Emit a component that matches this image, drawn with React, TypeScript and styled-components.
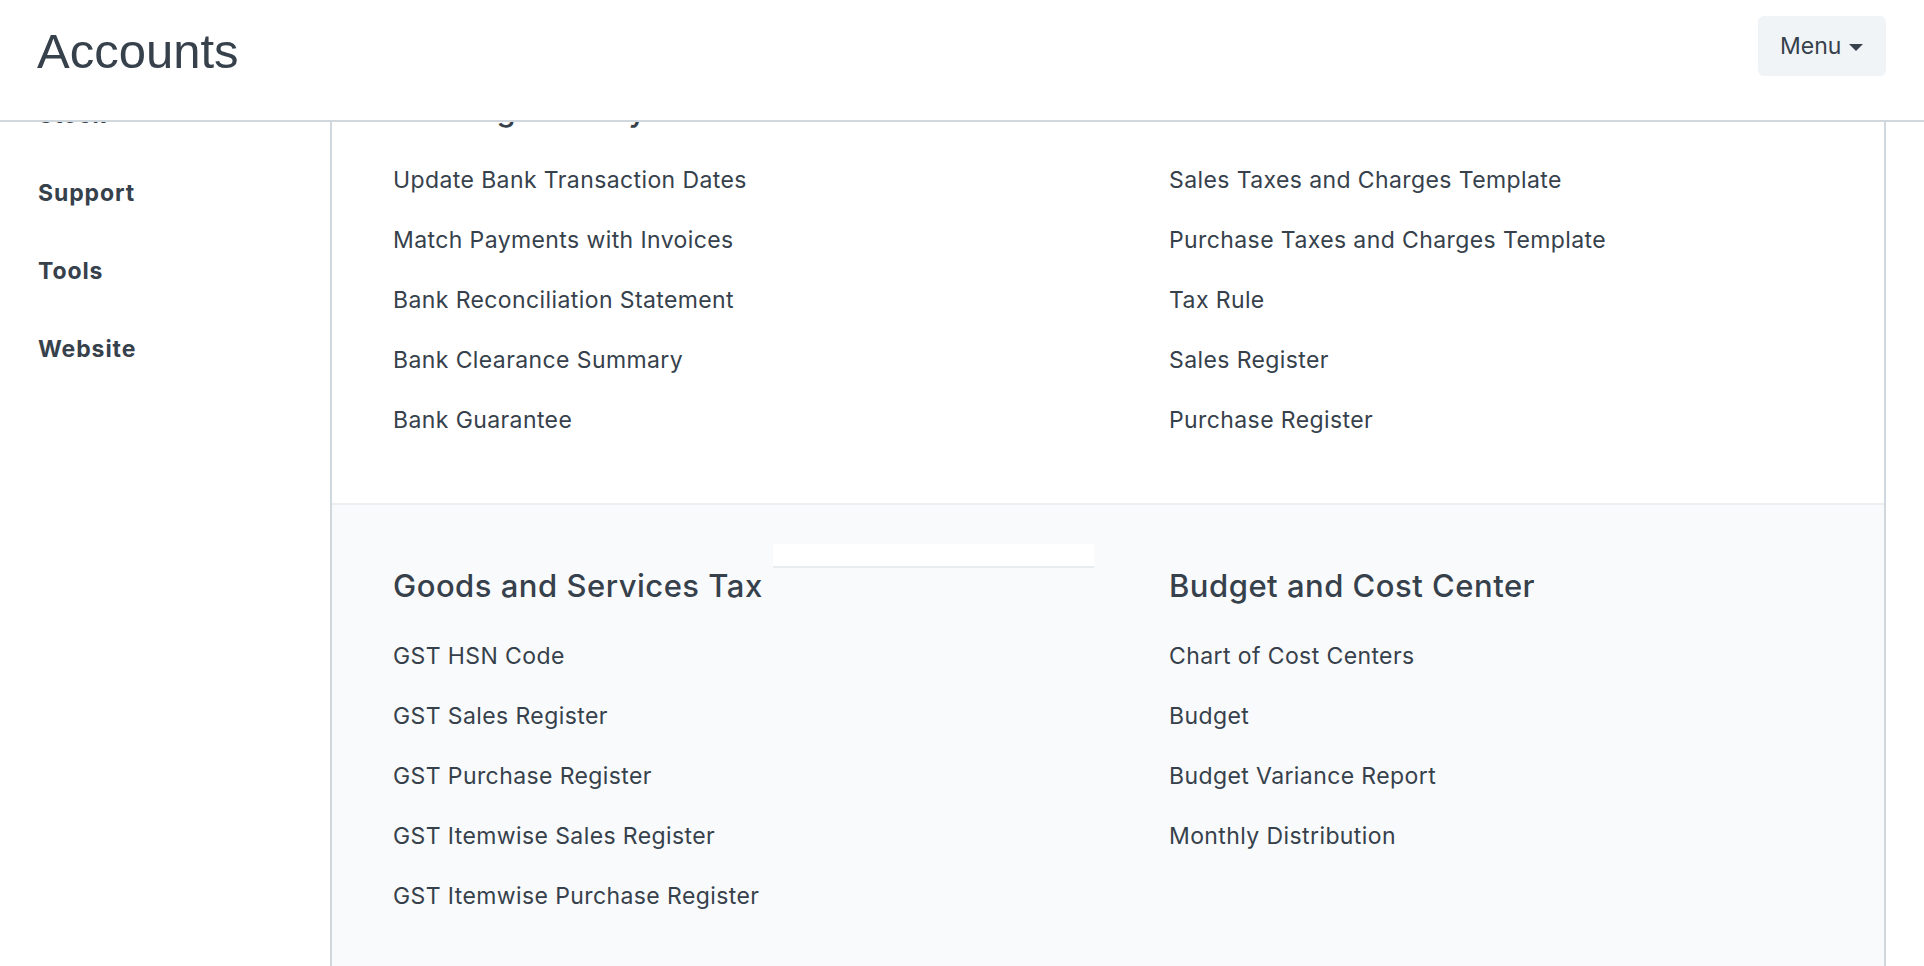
import { useLayoutEffect, useRef } from "react";
import styled, { createGlobalStyle } from "styled-components";

const GlobalStyle = createGlobalStyle`
  html, body {
    margin: 0;
    padding: 0;
  }
  body {
    font-family: Inter, "Noto Sans", sans-serif;
    color: #36414c;
    background: #ffffff;
  }
  * {
    box-sizing: border-box;
  }
`;

const Page = styled.div`
  height: 100vh;
  display: flex;
  flex-direction: column;
  overflow: hidden;
`;

const Header = styled.header`
  flex: none;
  height: 122px;
  display: flex;
  justify-content: space-between;
  align-items: flex-start;
  padding: 16px 38px 0 37px;
  border-bottom: 2px solid #d1d8dd;
  background: #ffffff;
`;

const Title = styled.h1`
  margin: 5px 0 0;
  font-family: "Liberation Sans", Arial, sans-serif;
  font-size: 49px;
  line-height: 60px;
  font-weight: 400;
`;

const MenuButton = styled.button`
  height: 60px;
  width: 128px;
  display: flex;
  align-items: center;
  gap: 8px;
  padding: 0 0 0 22px;
  border: none;
  border-radius: 6px;
  background: #f0f4f7;
  color: #36414c;
  font-family: inherit;
  font-size: 23px;
`;

const Caret = styled.span`
  width: 0;
  height: 0;
  border-left: 7px solid transparent;
  border-right: 7px solid transparent;
  border-top: 7px solid #36414c;
  margin-top: 2px;
`;

// scrolled area under the header
const Body = styled.div`
  flex: 1;
  overflow: hidden;
  display: flex;
  align-items: flex-start;
`;

const Sidebar = styled.nav`
  flex: none;
  width: 330px;
  padding: 55px 0 0 38px;
`;

const SideItem = styled.div`
  font-size: 23px;
  line-height: 78px;
  font-weight: 700;
  letter-spacing: 0.9px;
`;

const Main = styled.main`
  flex: none;
  width: 1556px;
  border-left: 2px solid #d1d8dd;
  border-right: 2px solid #d1d8dd;
`;

const Row = styled.section<{ $shade: boolean }>`
  position: relative;
  display: grid;
  grid-template-columns: 1fr 1fr;
  column-gap: 122px;
  padding: 61px;
  background: ${(p) => (p.$shade ? "#f9fafb" : "#ffffff")};
  border-bottom: 2px solid #ebeff2;
`;

const Column = styled.div`
  display: flex;
  flex-direction: column;
`;

const Heading = styled.h4`
  margin: 0 0 28px;
  font-size: 31px;
  line-height: 40px;
  font-weight: 500;
  letter-spacing: 0.5px;
`;

const LinkList = styled.div`
  display: flex;
  flex-direction: column;
  gap: 16px;
`;

const LinkItem = styled.a`
  font-size: 23px;
  line-height: 44px;
  letter-spacing: 0.4px;
  color: #36414c;
  text-decoration: none;
`;

const Ghost = styled.div`
  position: absolute;
  top: 39px;
  left: 441px;
  width: 321px;
  height: 24px;
  background: #ffffff;
  border-bottom: 2px solid #e8ecef;
`;

const modules = [
  "Manufacturing",
  "Payroll",
  "Projects",
  "Quality Management",
  "Selling",
  "Settings",
  "Stock",
  "Support",
  "Tools",
  "Website",
];

type Section = { title: string; links: string[] };

const rows: { sections: Section[]; ghost?: boolean }[] = [
  {
    sections: [
      {
        title: "Accounting Statements",
        links: [
          "General Ledger",
          "Trial Balance",
          "Balance Sheet",
          "Cash Flow",
          "Profit and Loss Statement",
        ],
      },
      {
        title: "Company and Accounts",
        links: ["Company", "Chart of Accounts", "Journal Entry", "Accounts Settings", "Fiscal Year"],
      },
    ],
  },
  {
    sections: [
      {
        title: "Banking and Payments",
        links: [
          "Update Bank Transaction Dates",
          "Match Payments with Invoices",
          "Bank Reconciliation Statement",
          "Bank Clearance Summary",
          "Bank Guarantee",
        ],
      },
      {
        title: "Taxes",
        links: [
          "Sales Taxes and Charges Template",
          "Purchase Taxes and Charges Template",
          "Tax Rule",
          "Sales Register",
          "Purchase Register",
        ],
      },
    ],
  },
  {
    ghost: true,
    sections: [
      {
        title: "Goods and Services Tax",
        links: [
          "GST HSN Code",
          "GST Sales Register",
          "GST Purchase Register",
          "GST Itemwise Sales Register",
          "GST Itemwise Purchase Register",
        ],
      },
      {
        title: "Budget and Cost Center",
        links: ["Chart of Cost Centers", "Budget", "Budget Variance Report", "Monthly Distribution"],
      },
    ],
  },
  {
    sections: [
      {
        title: "Opening and Closing",
        links: ["Opening Invoice Creation Tool", "Period Closing Voucher", "Exchange Rate Revaluation"],
      },
      {
        title: "Subscription Management",
        links: ["Subscriber", "Subscription Plan", "Subscription"],
      },
    ],
  },
];

const SCROLL_TOP = 569;

export default function App() {
  const body = useRef<HTMLDivElement>(null);

  useLayoutEffect(() => {
    if (body.current) body.current.scrollTop = SCROLL_TOP;
  }, []);

  return (
    <Page>
      <GlobalStyle />
      <Header>
        <Title>Accounts</Title>
        <MenuButton>
          Menu
          <Caret />
        </MenuButton>
      </Header>
      <Body ref={body}>
        <Sidebar>
          {modules.map((m) => (
            <SideItem key={m}>{m}</SideItem>
          ))}
        </Sidebar>
        <Main>
          {rows.map((row, i) => (
            <Row key={i} $shade={i % 2 === 0}>
              {row.sections.map((s) => (
                <Column key={s.title}>
                  <Heading>{s.title}</Heading>
                  <LinkList>
                    {s.links.map((l) => (
                      <LinkItem key={l}>{l}</LinkItem>
                    ))}
                  </LinkList>
                </Column>
              ))}
              {row.ghost && <Ghost />}
            </Row>
          ))}
        </Main>
      </Body>
    </Page>
  );
}
